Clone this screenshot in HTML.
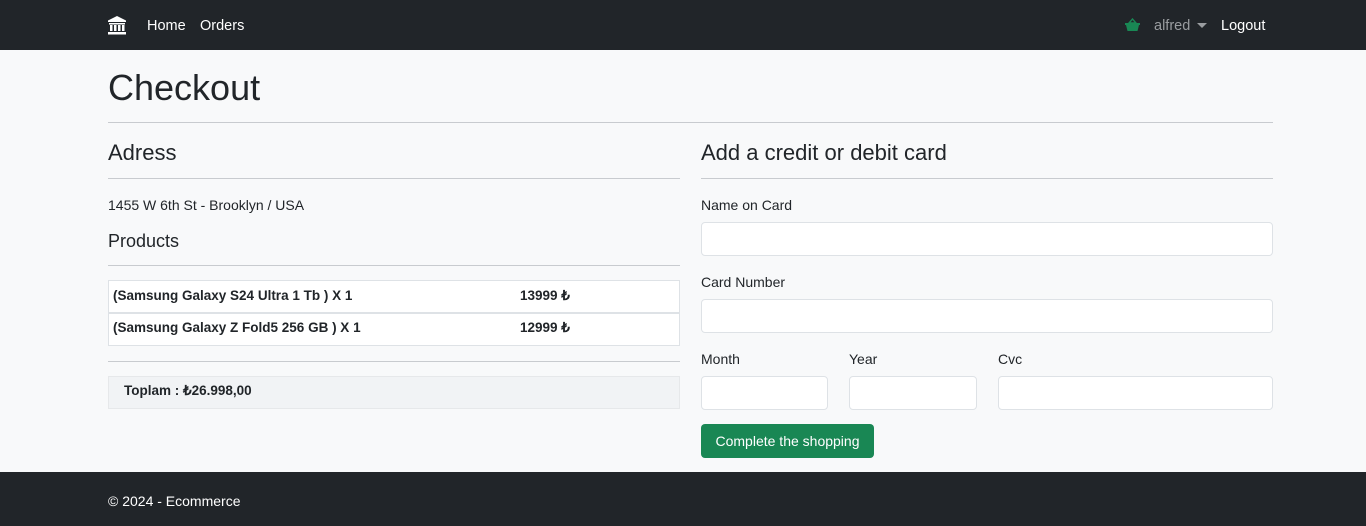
<!DOCTYPE html><html><head><style>
*{box-sizing:border-box}body{margin:0;background:#f8f9fa;font-family:"Liberation Sans",sans-serif;color:#212529;width:1366px;height:526px;position:relative;overflow:hidden}
.a{position:absolute}
nav{position:absolute;left:0;top:0;width:1366px;height:50px;background:#212529}
.w{color:#fff;font-size:15px}
hr{position:absolute;margin:0;border:0;border-top:1px solid #c8cbcf;height:0}
.in{position:absolute;background:#fff;border:1px solid #dee2e6;border-radius:4px;height:34px}
.lb{position:absolute;font-size:14px}
.row{position:absolute;left:108px;width:572px;height:33px;background:#fff;border:1px solid #dee2e6;font-size:13.5px;font-weight:bold}
</style></head><body>
<nav>
<svg class="a" style="left:107px;top:15px" width="20" height="20" viewBox="0 0 20 20" fill="#fff"><path d="M10 1L1 5.5V7h18V5.5z"/><rect x="2" y="8" width="16" height="1.5"/><rect x="3" y="10" width="2.5" height="6"/><rect x="7" y="10" width="2.5" height="6"/><rect x="11" y="10" width="2.5" height="6"/><rect x="15" y="10" width="2.5" height="6"/><rect x="1" y="17" width="18" height="2.5"/></svg>
<span class="a w" style="left:147px;top:18px;font-size:14.5px">Home</span><span class="a w" style="left:200px;top:18px;font-size:14.5px">Orders</span>
<svg class="a" style="left:1125px;top:18px" width="15" height="14" viewBox="0 0 15 14" fill="#198754"><path d="M4 5L7.5 1L11 5z" fill="none" stroke="#198754" stroke-width="1.4"/><path d="M0 5h15v2h-1l-1.5 6h-10L1 7H0z"/></svg>
<span class="a" style="left:1154px;top:18px;color:#9a9da0;font-size:14.5px">alfred</span>
<span class="a" style="left:1197px;top:23px;border:5px solid transparent;border-top:5px solid #9a9da0;width:0;height:0"></span>
<span class="a w" style="left:1221px;top:18px;font-size:14.5px">Logout</span>
</nav>
<div class="a" style="left:108px;top:67px;font-size:36px">Checkout</div>
<hr style="left:108px;top:122px;width:1165px">
<div class="a" style="left:108px;top:140px;font-size:22px">Adress</div>
<hr style="left:108px;top:178px;width:572px">
<div class="a" style="left:108px;top:197px;font-size:14px">1455 W 6th St - Brooklyn / USA</div>
<div class="a" style="left:108px;top:231px;font-size:18px">Products</div>
<hr style="left:108px;top:265px;width:572px">
<div class="row" style="top:280px"><span class="a" style="left:4px;top:7px">(Samsung Galaxy S24 Ultra 1 Tb ) X 1</span><span class="a" style="left:411px;top:7px">13999 ₺</span></div>
<div class="row" style="top:313px"><span class="a" style="left:4px;top:6px">(Samsung Galaxy Z Fold5 256 GB ) X 1</span><span class="a" style="left:411px;top:6px">12999 ₺</span></div>
<hr style="left:108px;top:361px;width:572px">
<div class="row" style="top:376px;background:#f1f3f5;border-color:#e6e8ea"><span class="a" style="left:15px;top:6px">Toplam : ₺26.998,00</span></div>
<div class="a" style="left:701px;top:140px;font-size:22px">Add a credit or debit card</div>
<hr style="left:701px;top:178px;width:572px">
<div class="lb" style="left:701px;top:197px">Name on Card</div><div class="in" style="left:701px;top:222px;width:572px"></div>
<div class="lb" style="left:701px;top:274px">Card Number</div><div class="in" style="left:701px;top:299px;width:572px"></div>
<div class="lb" style="left:701px;top:351px">Month</div><div class="in" style="left:701px;top:376px;width:127px"></div>
<div class="lb" style="left:849px;top:351px">Year</div><div class="in" style="left:849px;top:376px;width:128px"></div>
<div class="lb" style="left:998px;top:351px">Cvc</div><div class="in" style="left:998px;top:376px;width:275px"></div>
<div class="a" style="left:701px;top:424px;width:173px;height:34px;background:#198754;border-radius:4px;color:#fff;font-size:14px;text-align:center;line-height:35px">Complete the shopping</div>
<div class="a" style="left:0;top:472px;width:1366px;height:54px;background:#212529"><span class="a w" style="left:108px;top:21px;font-size:14px">© 2024 - Ecommerce</span></div>
</body></html>
